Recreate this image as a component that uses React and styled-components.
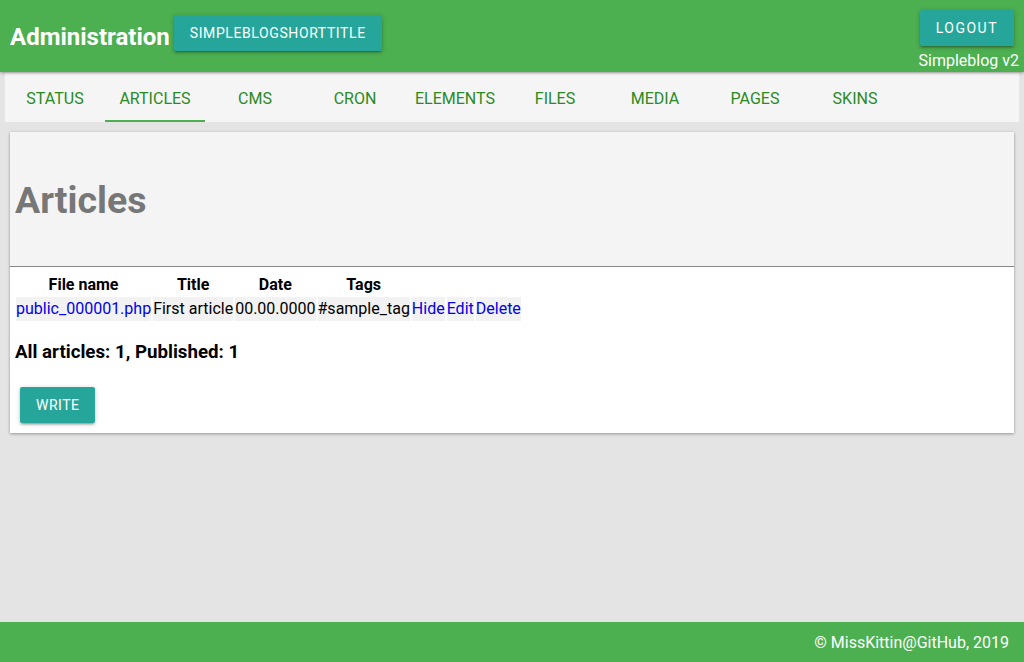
import React from "react";
import styled, { createGlobalStyle } from "styled-components";

const Global = createGlobalStyle`
  html, body { margin: 0; padding: 0; }
  body {
    background: #e4e4e4;
    font-family: Roboto, "Liberation Sans", sans-serif;
    color: #000;
  }
  #root { min-height: 662px; display: flex; flex-direction: column; }
`;

const Page = styled.div`
  min-height: 662px;
  display: flex;
  flex-direction: column;
`;

const Header = styled.header`
  background: #4caf50;
  height: 72px;
  display: flex;
  justify-content: space-between;
  box-shadow: 0 1px 3px rgba(0, 0, 0, 0.35);
  position: relative;
  z-index: 2;
`;

const Brand = styled.div`
  display: flex;
  align-items: flex-start;
  padding: 15px 0 0 10px;
`;

const Title = styled.h1`
  margin: 7px 4px 0 0;
  font-size: 24px;
  font-weight: 700;
  color: #fff;
  line-height: 30px;
`;

const Button = styled.button`
  background: #26a69a;
  color: #fff;
  border: none;
  border-radius: 2px;
  height: 36px;
  padding: 0 16px;
  font-family: Roboto, "Liberation Sans", sans-serif;
  font-size: 14px;
  letter-spacing: ${(p) => p.$ls || 0.6}px;
  text-transform: uppercase;
  box-shadow: 0 2px 2px rgba(0, 0, 0, 0.14), 0 3px 1px -2px rgba(0, 0, 0, 0.12), 0 1px 5px rgba(0, 0, 0, 0.2);
  cursor: pointer;
`;

const Side = styled.div`
  display: flex;
  flex-direction: column;
  align-items: flex-end;
  padding: 10px 5px 0 0;
`;

const LogoutWrap = styled.div`
  padding-right: 5px;
`;

const Version = styled.div`
  color: #fff;
  font-size: 16px;
  margin-top: 5px;
  line-height: 19px;
`;

const Nav = styled.nav`
  margin: 1px 5px 0 5px;
  height: 49px;
  background: #f5f5f5;
  display: flex;
`;

const Tab = styled.a`
  width: 100px;
  display: flex;
  align-items: center;
  justify-content: center;
  color: #2a8a24;
  font-size: 16px;
  text-transform: uppercase;
  text-decoration: none;
  box-sizing: border-box;
  padding-top: ${(p) => (p.$active ? 4 : 2)}px;
  border-bottom: ${(p) => (p.$active ? "2px solid #4caf50" : "none")};
`;

const Main = styled.main`
  flex: 1;
  padding: 10px 10px 0 10px;
`;

const Card = styled.section`
  background: #fff;
  box-shadow: 0 1px 3px rgba(0, 0, 0, 0.35);
`;

const CardHead = styled.div`
  background: #f4f4f4;
  height: 134px;
  border-bottom: 1px solid #888;
  display: flex;
  align-items: center;
  padding-left: 5px;
`;

const H2 = styled.h2`
  margin: 0;
  font-size: 37.5px;
  font-weight: 700;
  color: #777;
  padding-top: 1px;
`;

const Body = styled.div`
  padding: 7px 5px 10px 4px;
`;

const Table = styled.table`
  border-collapse: separate;
  border-spacing: 2px 0;
  font-size: 16px;
  line-height: 19px;
`;

const Th = styled.th`
  font-weight: 700;
  padding: 1px 0 3px;
  text-align: center;
`;

const Td = styled.td`
  padding: 2px 0 3px;
  white-space: nowrap;
  background: #f2f2f2;
  color: ${(p) => (p.$link ? "#0000ee" : "#000")};
`;

const Summary = styled.h3`
  margin: 20px 0 0 1px;
  font-size: 18.7px;
  font-weight: 700;
`;

const Actions = styled.div`
  margin-top: 24px;
  padding-left: 6px;
`;

const Footer = styled.footer`
  background: #4caf50;
  height: 40px;
  margin-top: auto;
  display: flex;
  align-items: center;
  justify-content: flex-end;
  padding-right: 15px;
  color: #fff;
  font-size: 16px;
`;

const tabs = ["Status", "Articles", "CMS", "Cron", "Elements", "Files", "Media", "Pages", "Skins"];

export default function App() {
  return (
    <Page>
      <Global />
      <Header>
        <Brand>
          <Title>Administration</Title>
          <Button $ls={0.6}>simpleblogshorttitle</Button>
        </Brand>
        <Side>
          <LogoutWrap>
            <Button $ls={1.5}>Logout</Button>
          </LogoutWrap>
          <Version>Simpleblog v2</Version>
        </Side>
      </Header>
      <Nav>
        {tabs.map((t) => (
          <Tab key={t} $active={t === "Articles"}>{t}</Tab>
        ))}
      </Nav>
      <Main>
        <Card>
          <CardHead>
            <H2>Articles</H2>
          </CardHead>
          <Body>
            <Table>
              <thead>
                <tr>
                  <Th>File name</Th>
                  <Th>Title</Th>
                  <Th>Date</Th>
                  <Th>Tags</Th>
                  <Th />
                  <Th />
                  <Th />
                </tr>
              </thead>
              <tbody>
                <tr>
                  <Td $link>public_000001.php</Td>
                  <Td>First article</Td>
                  <Td>00.00.0000</Td>
                  <Td>#sample_tag</Td>
                  <Td $link>Hide</Td>
                  <Td $link>Edit</Td>
                  <Td $link>Delete</Td>
                </tr>
              </tbody>
            </Table>
            <Summary>All articles: 1, Published: 1</Summary>
            <Actions>
              <Button $ls={0.5}>Write</Button>
            </Actions>
          </Body>
        </Card>
      </Main>
      <Footer>© MissKittin@GitHub, 2019</Footer>
    </Page>
  );
}
